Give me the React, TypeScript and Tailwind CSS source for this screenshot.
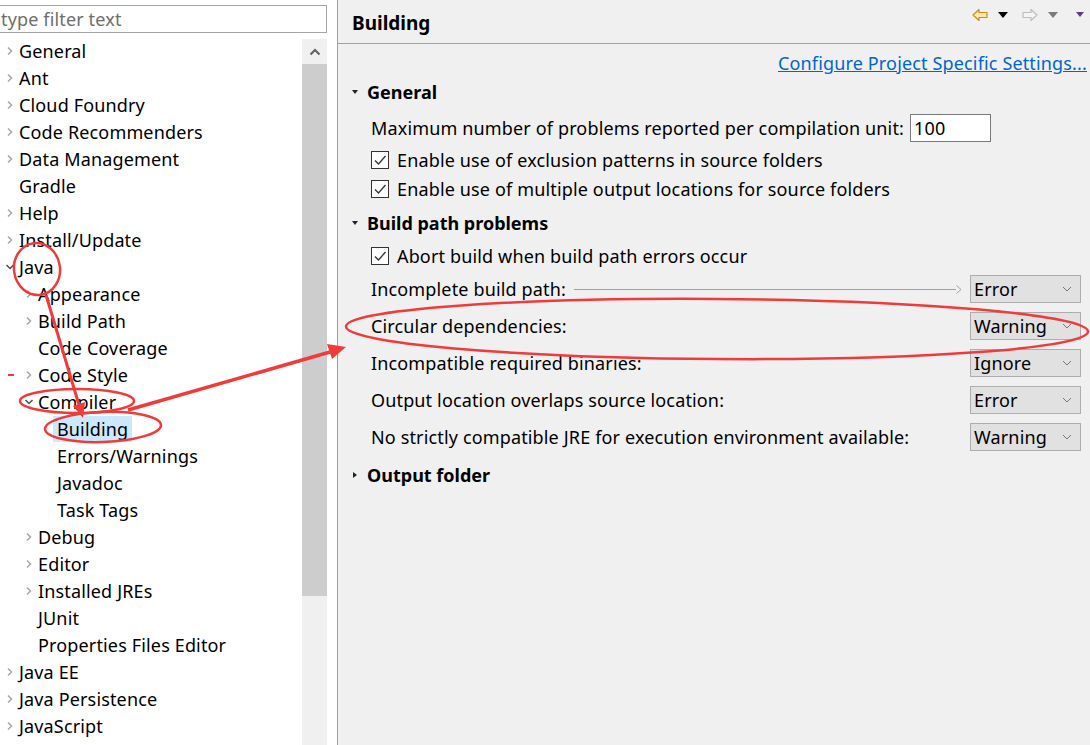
import React from 'react';

type TreeNode = {
  label: string;
  level: number;
  chevron?: 'right' | 'down';
  selected?: boolean;
};

const tree: TreeNode[] = [
  { label: 'General', level: 0, chevron: 'right' },
  { label: 'Ant', level: 0, chevron: 'right' },
  { label: 'Cloud Foundry', level: 0, chevron: 'right' },
  { label: 'Code Recommenders', level: 0, chevron: 'right' },
  { label: 'Data Management', level: 0, chevron: 'right' },
  { label: 'Gradle', level: 0 },
  { label: 'Help', level: 0, chevron: 'right' },
  { label: 'Install/Update', level: 0, chevron: 'right' },
  { label: 'Java', level: 0, chevron: 'down' },
  { label: 'Appearance', level: 1, chevron: 'right' },
  { label: 'Build Path', level: 1, chevron: 'right' },
  { label: 'Code Coverage', level: 1 },
  { label: 'Code Style', level: 1, chevron: 'right' },
  { label: 'Compiler', level: 1, chevron: 'down' },
  { label: 'Building', level: 2, selected: true },
  { label: 'Errors/Warnings', level: 2 },
  { label: 'Javadoc', level: 2 },
  { label: 'Task Tags', level: 2 },
  { label: 'Debug', level: 1, chevron: 'right' },
  { label: 'Editor', level: 1, chevron: 'right' },
  { label: 'Installed JREs', level: 1, chevron: 'right' },
  { label: 'JUnit', level: 1 },
  { label: 'Properties Files Editor', level: 1 },
  { label: 'Java EE', level: 0, chevron: 'right' },
  { label: 'Java Persistence', level: 0, chevron: 'right' },
  { label: 'JavaScript', level: 0, chevron: 'right' },
];

const problems = [
  { label: 'Incomplete build path:', value: 'Error', leader: true, mt: 'mt-[5px]' },
  { label: 'Circular dependencies:', value: 'Warning', mt: 'mt-[9px]' },
  { label: 'Incompatible required binaries:', value: 'Ignore', mt: 'mt-[9px]' },
  { label: 'Output location overlaps source location:', value: 'Error', mt: 'mt-[9px]' },
  { label: 'No strictly compatible JRE for execution environment available:', value: 'Warning', mt: 'mt-[9px]' },
];

function Chevron({ dir }: { dir: 'right' | 'down' }) {
  if (dir === 'down') {
    return (
      <svg width="10" height="8" viewBox="0 0 10 8">
        <path d="M1.5 2 L5 5.5 L8.5 2" fill="none" stroke="#4d4d4d" strokeWidth="1.5" />
      </svg>
    );
  }
  return (
    <svg width="8" height="10" viewBox="0 0 8 10">
      <path d="M2 1.5 L5.5 5 L2 8.5" fill="none" stroke="#a8a8a8" strokeWidth="1.5" />
    </svg>
  );
}

function Checkbox() {
  return (
    <span className="flex h-[18px] w-[18px] shrink-0 items-center justify-center border border-[#333333] bg-white">
      <svg width="14" height="12" viewBox="0 0 14 12">
        <path d="M2 6.5 L5.5 10 L12.5 2" fill="none" stroke="#333333" strokeWidth="1.3" />
      </svg>
    </span>
  );
}

function Combo({ value }: { value: string }) {
  return (
    <div className="mr-[9px] flex h-[28px] w-[111px] shrink-0 items-center justify-between border border-[#adadad] bg-[#e1e1e1] pl-[3px] pr-[8px]">
      <span>{value}</span>
      <svg width="10" height="6" viewBox="0 0 10 6">
        <path d="M1 1 L5 5 L9 1" fill="none" stroke="#777777" strokeWidth="1" />
      </svg>
    </div>
  );
}

function SectionTitle({ label, open, mt }: { label: string; open: boolean; mt: string }) {
  return (
    <div className={`${mt} flex h-[28px] items-center font-bold tracking-normal`}>
      <span className="flex w-[29px] justify-center pl-[4px]">
        {open ? (
          <svg width="8" height="6" viewBox="0 0 8 6">
            <path d="M1 1 L7 1 L4 5 Z" fill="#222222" />
          </svg>
        ) : (
          <svg width="6" height="8" viewBox="0 0 6 8">
            <path d="M1 1 L5 4 L1 7 Z" fill="#222222" />
          </svg>
        )}
      </span>
      <span>{label}</span>
    </div>
  );
}

function Annotations() {
  return (
    <svg className="pointer-events-none absolute inset-0" width="1090" height="745" viewBox="0 0 1090 745">
      <g fill="none" stroke="#f23a3a" strokeWidth="2.5">
        <ellipse cx="37" cy="269" rx="23" ry="26" transform="rotate(-8 37 269)" />
        <ellipse cx="77" cy="401" rx="57" ry="12" />
        <ellipse cx="103" cy="427" rx="58" ry="15" transform="rotate(-2 103 427)" />
        <ellipse cx="717" cy="329" rx="371" ry="30" transform="rotate(0.4 717 329)" />
        <line x1="46" y1="295" x2="79" y2="405" strokeWidth="3" />
        <line x1="128" y1="410" x2="330" y2="352" strokeWidth="3.5" />
        <line x1="8" y1="375" x2="14" y2="375" strokeWidth="2" />
      </g>
      <g fill="#f23a3a">
        <polygon points="83,418 85,402 73,406" />
        <polygon points="346,347 332,359 327,344" />
      </g>
    </svg>
  );
}

export default function App() {
  return (
    <div className="relative flex h-[745px] w-[1090px] overflow-hidden font-['Noto_Sans',sans-serif] text-[18px] leading-none tracking-[0.15px] text-black">
      <aside className="flex w-[338px] shrink-0 flex-col border-r border-[#a0a0a0] bg-white">
        <input
          type="text"
          placeholder="type filter text"
          className="ml-[-1px] mt-[5px] h-[28px] w-[328px] border border-[#a5a5a5] bg-white pl-[1px] text-[18px] outline-none placeholder:text-[#6d6d6d]"
        />
        <div className="mt-[4px] flex min-h-0 flex-1">
          <ul className="flex-1">
            {tree.map((node) => (
              <li key={node.label} className="flex h-[27px] items-center" style={{ paddingLeft: node.level * 19 }}>
                <span className="flex w-[19px] shrink-0 items-center justify-center">
                  {node.chevron && <Chevron dir={node.chevron} />}
                </span>
                <span className={node.selected ? 'ml-[-4px] flex h-[26px] items-center bg-[#cce8ff] px-[4px]' : ''}>
                  {node.label}
                </span>
              </li>
            ))}
          </ul>
          <div className="mt-[2px] flex w-[25px] flex-col bg-[#f0f0f0]">
            <div className="flex h-[25px] items-center justify-center">
              <svg width="12" height="8" viewBox="0 0 12 8">
                <path d="M1.5 6.5 L6 2 L10.5 6.5" fill="none" stroke="#606060" strokeWidth="2" />
              </svg>
            </div>
            <div className="h-[532px] bg-[#cdcdcd]" />
          </div>
          <div className="w-[10px]" />
        </div>
      </aside>

      <main className="flex flex-1 flex-col bg-[#f0f0f0]">
        <header className="flex h-[44px] shrink-0 items-start justify-between border-b border-[#a0a0a0] pl-[14px]">
          <h1 className="mt-[14px] text-[19px] font-bold tracking-normal">Building</h1>
          <div className="mr-[6px] mt-[8px] flex items-center gap-[10px]">
            <svg width="16" height="14" viewBox="0 0 16 14">
              <path d="M1 7 L7 1.5 L7 4.5 L15 4.5 L15 9.5 L7 9.5 L7 12.5 Z" fill="#fde9a8" stroke="#d08a1a" strokeWidth="1.2" strokeLinejoin="round" />
            </svg>
            <svg width="10" height="7" viewBox="0 0 10 7">
              <path d="M0 0 L10 0 L5 6 Z" fill="#000000" />
            </svg>
            <svg width="16" height="14" viewBox="0 0 16 14" className="ml-[4px]">
              <path d="M15 7 L9 1.5 L9 4.5 L1 4.5 L1 9.5 L9 9.5 L9 12.5 Z" fill="#f4f4f4" stroke="#bdbdbd" strokeWidth="1.2" strokeLinejoin="round" />
            </svg>
            <svg width="10" height="7" viewBox="0 0 10 7">
              <path d="M0 0 L10 0 L5 6 Z" fill="#7a7a7a" />
            </svg>
            <svg width="8" height="6" viewBox="0 0 8 6" className="ml-[8px]">
              <path d="M0 0 L8 0 L4 5 Z" fill="#5b3c8a" />
            </svg>
          </div>
        </header>

        <div className="mt-[5px] flex h-[28px] items-center justify-end pr-[3px]">
          <a className="cursor-pointer text-[#0066cc] underline">Configure Project Specific Settings...</a>
        </div>

        <SectionTitle label="General" open mt="mt-[1px]" />
        <div className="ml-[33px] mt-[8px] flex h-[28px] items-center">
          <span>Maximum number of problems reported per compilation unit:</span>
          <div className="ml-[6px] flex h-[28px] w-[81px] items-center border border-[#7a7a7a] bg-white pl-[3px]">100</div>
        </div>
        <label className="ml-[33px] mt-[4px] flex h-[28px] items-center gap-[8px]">
          <Checkbox />
          <span>Enable use of exclusion patterns in source folders</span>
        </label>
        <label className="ml-[33px] mt-[1px] flex h-[28px] items-center gap-[8px]">
          <Checkbox />
          <span>Enable use of multiple output locations for source folders</span>
        </label>

        <SectionTitle label="Build path problems" open mt="mt-[6px]" />
        <label className="ml-[33px] mt-[5px] flex h-[28px] items-center gap-[8px]">
          <Checkbox />
          <span>Abort build when build path errors occur</span>
        </label>
        {problems.map((p) => (
          <div key={p.label} className={`${p.mt} ml-[33px] flex h-[28px] items-center`}>
            <span>{p.label}</span>
            <div className="flex flex-1 items-center px-[8px]">
              {p.leader && (
                <>
                  <div className="h-px flex-1 bg-[#a0a0a0]" />
                  <svg width="6" height="9" viewBox="0 0 6 9">
                    <path d="M0.5 0.5 L5 4.5 L0.5 8.5" fill="none" stroke="#a0a0a0" strokeWidth="1" />
                  </svg>
                </>
              )}
            </div>
            <Combo value={p.value} />
          </div>
        ))}

        <SectionTitle label="Output folder" open={false} mt="mt-[10px]" />
      </main>

      <Annotations />
    </div>
  );
}
